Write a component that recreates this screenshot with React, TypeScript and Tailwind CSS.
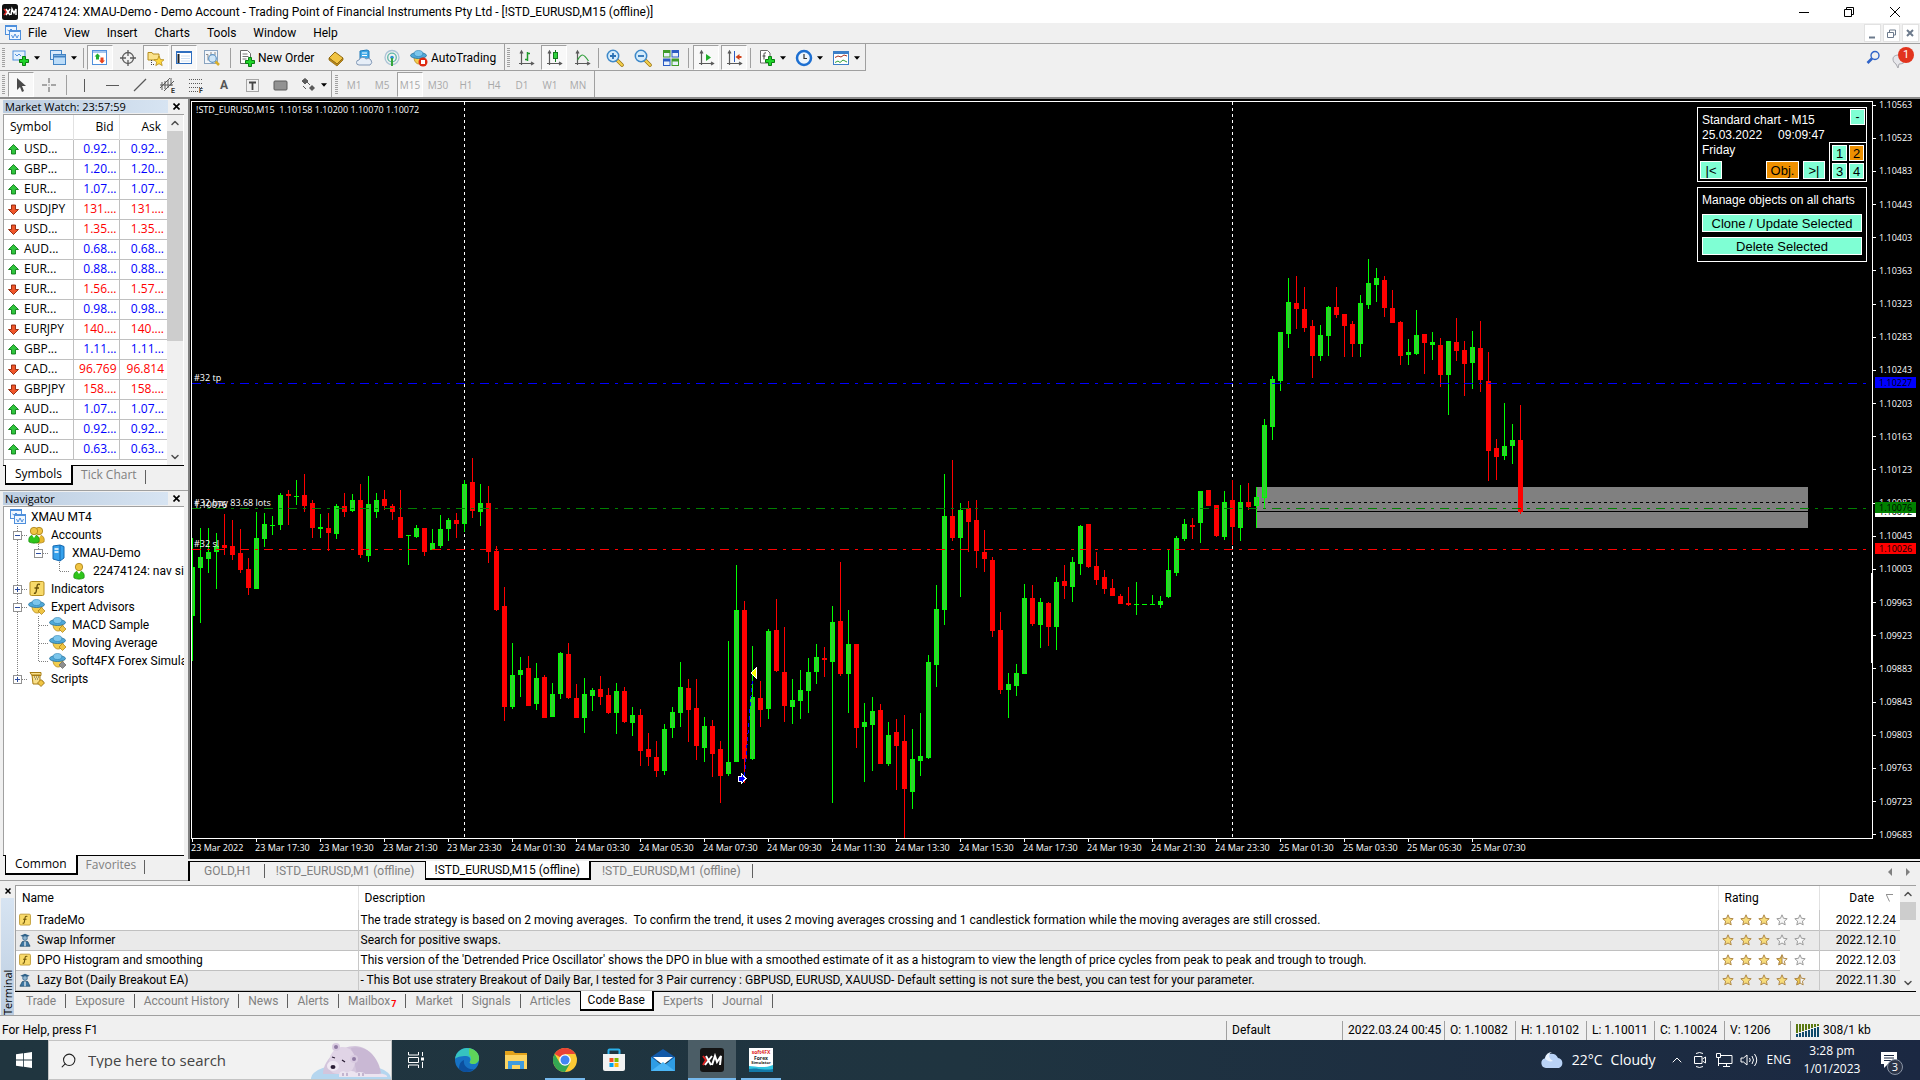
import type { ReactNode } from "react"
import { ChevronDown, ChevronUp, Search } from "lucide-react"

type Candle = [number, number, number, number, number]

// up flag, high, body top, body bottom, low - one row per 15 minute bar
const candles: Candle[] = [
  [1, 538, 567, 616, 661], [1, 528, 557, 568, 623], [1, 528, 552, 559, 573], [1, 533, 546, 552, 589],
  [0, 514, 545, 548, 555], [0, 520, 546, 555, 560], [0, 529, 553, 570, 573], [0, 558, 569, 588, 595],
  [1, 512, 538, 589, 589], [1, 513, 524, 539, 547], [1, 516, 525, 526, 535], [1, 493, 495, 525, 530],
  [0, 490, 494, 496, 525], [1, 480, 496, 497, 505], [0, 474, 495, 506, 512], [0, 500, 503, 528, 538],
  [1, 514, 527, 529, 538], [0, 513, 528, 533, 551], [1, 504, 506, 534, 539], [0, 493, 506, 512, 517],
  [1, 494, 500, 511, 512], [0, 484, 500, 555, 558], [1, 476, 504, 556, 562], [1, 493, 500, 512, 518],
  [0, 490, 499, 506, 510], [0, 504, 506, 512, 520], [0, 490, 517, 538, 538], [1, 535, 535, 536, 565],
  [1, 525, 528, 537, 538], [0, 528, 528, 552, 556], [1, 529, 543, 550, 550], [1, 515, 529, 546, 548],
  [1, 518, 520, 529, 541], [0, 513, 520, 524, 538], [1, 480, 484, 524, 532], [0, 458, 482, 511, 518],
  [1, 484, 503, 512, 526], [0, 486, 503, 552, 563], [0, 546, 551, 610, 611], [0, 587, 606, 707, 721],
  [1, 643, 675, 707, 709], [1, 657, 670, 675, 697], [0, 656, 668, 706, 706], [1, 663, 678, 704, 710],
  [0, 675, 677, 718, 718], [1, 683, 694, 717, 717], [1, 652, 653, 694, 699], [0, 643, 654, 698, 699],
  [0, 684, 698, 718, 718], [1, 678, 694, 718, 733], [1, 688, 690, 696, 711], [0, 676, 689, 697, 705],
  [0, 688, 695, 713, 714], [1, 683, 691, 713, 734], [0, 687, 691, 722, 723], [1, 707, 715, 723, 736],
  [0, 709, 715, 751, 766], [0, 733, 749, 757, 766], [0, 741, 757, 771, 777], [1, 724, 729, 771, 775],
  [1, 707, 712, 728, 738], [1, 662, 687, 713, 727], [0, 679, 688, 710, 742], [0, 679, 708, 746, 760],
  [1, 717, 726, 748, 762], [0, 720, 726, 754, 777], [0, 741, 749, 776, 803], [1, 641, 762, 774, 776],
  [1, 565, 610, 762, 762], [0, 601, 610, 759, 783], [1, 646, 697, 759, 760], [0, 681, 698, 710, 727],
  [1, 629, 631, 709, 719], [0, 599, 630, 671, 672], [0, 627, 672, 706, 722], [1, 679, 700, 707, 724],
  [1, 670, 690, 701, 719], [1, 658, 672, 691, 713], [1, 644, 657, 672, 684], [0, 647, 658, 660, 677],
  [1, 606, 622, 662, 803], [0, 562, 621, 674, 676], [1, 610, 644, 674, 713], [0, 644, 644, 728, 748],
  [1, 703, 722, 727, 782], [1, 697, 711, 725, 771], [0, 704, 710, 764, 764], [1, 722, 735, 764, 766],
  [0, 719, 732, 746, 790], [0, 715, 741, 789, 838], [1, 729, 759, 792, 809], [1, 713, 756, 761, 776],
  [1, 655, 662, 758, 759], [1, 585, 609, 665, 687], [1, 474, 516, 610, 625], [0, 460, 516, 538, 541],
  [1, 503, 510, 538, 597], [0, 501, 508, 522, 552], [0, 500, 520, 551, 568], [0, 530, 552, 559, 572],
  [0, 557, 560, 631, 637], [0, 612, 630, 690, 694], [1, 673, 684, 690, 718], [1, 664, 673, 686, 696],
  [1, 584, 598, 674, 674], [0, 585, 598, 624, 626], [1, 598, 602, 625, 648], [0, 602, 603, 627, 646],
  [1, 577, 582, 627, 650], [0, 565, 581, 586, 599], [1, 557, 562, 587, 602], [1, 525, 526, 564, 575],
  [0, 524, 524, 567, 568], [0, 552, 566, 580, 585], [0, 570, 577, 589, 594], [0, 579, 588, 596, 596],
  [0, 594, 596, 604, 604], [0, 587, 603, 605, 606], [1, 582, 604, 605, 615], [1, 604, 604, 605, 605],
  [1, 595, 604, 605, 605], [1, 596, 601, 605, 608], [1, 550, 570, 597, 598], [1, 536, 538, 573, 576],
  [1, 519, 524, 539, 541], [0, 518, 525, 527, 539], [1, 491, 491, 523, 543], [0, 490, 490, 506, 506],
  [0, 505, 505, 536, 537], [1, 491, 502, 537, 540], [0, 480, 500, 527, 545], [1, 485, 502, 528, 541],
  [0, 483, 502, 507, 510], [1, 487, 497, 506, 528], [1, 419, 425, 498, 508], [1, 376, 379, 427, 440],
  [1, 332, 332, 381, 391], [1, 278, 302, 334, 348], [0, 276, 303, 309, 329], [0, 287, 309, 328, 332],
  [0, 320, 326, 356, 378], [1, 325, 335, 356, 361], [1, 306, 307, 336, 356], [0, 287, 307, 315, 318],
  [0, 314, 314, 326, 357], [0, 321, 324, 344, 357], [1, 295, 303, 344, 357], [1, 259, 283, 305, 309],
  [1, 268, 278, 285, 302], [0, 276, 280, 308, 317], [0, 290, 308, 323, 323], [0, 321, 322, 356, 365],
  [1, 339, 352, 355, 365], [1, 310, 335, 354, 355], [0, 334, 334, 343, 374], [1, 332, 342, 345, 360],
  [0, 338, 345, 375, 387], [1, 341, 341, 375, 415], [0, 318, 342, 351, 361], [0, 341, 350, 364, 396],
  [1, 331, 347, 363, 389], [0, 321, 348, 380, 392], [0, 352, 381, 451, 481], [0, 439, 448, 457, 480],
  [1, 403, 446, 456, 460], [1, 424, 440, 446, 464], [0, 405, 440, 512, 514],
]

const prices = [
  "1.10563", "1.10523", "1.10483", "1.10443", "1.10403", "1.10363", "1.10323", "1.10283",
  "1.10243", "1.10203", "1.10163", "1.10123", "1.10083", "1.10043", "1.10003", "1.09963",
  "1.09923", "1.09883", "1.09843", "1.09803", "1.09763", "1.09723", "1.09683",
]

const times = [
  "23 Mar 2022", "23 Mar 17:30", "23 Mar 19:30", "23 Mar 21:30", "23 Mar 23:30", "24 Mar 01:30",
  "24 Mar 03:30", "24 Mar 05:30", "24 Mar 07:30", "24 Mar 09:30", "24 Mar 11:30", "24 Mar 13:30",
  "24 Mar 15:30", "24 Mar 17:30", "24 Mar 19:30", "24 Mar 21:30", "24 Mar 23:30", "25 Mar 01:30",
  "25 Mar 03:30", "25 Mar 05:30", "25 Mar 07:30",
]

const symbols: [string, string, string, boolean][] = [
  ["USD...", "0.92...", "0.92...", true],
  ["GBP...", "1.20...", "1.20...", true],
  ["EUR...", "1.07...", "1.07...", true],
  ["USDJPY", "131....", "131....", false],
  ["USD...", "1.35...", "1.35...", false],
  ["AUD...", "0.68...", "0.68...", true],
  ["EUR...", "0.88...", "0.88...", true],
  ["EUR...", "1.56...", "1.57...", false],
  ["EUR...", "0.98...", "0.98...", true],
  ["EURJPY", "140....", "140....", false],
  ["GBP...", "1.11...", "1.11...", true],
  ["CAD...", "96.769", "96.814", false],
  ["GBPJPY", "158....", "158....", false],
  ["AUD...", "1.07...", "1.07...", true],
  ["AUD...", "0.92...", "0.92...", true],
  ["AUD...", "0.63...", "0.63...", true],
]

const codeBase = [
  { icon: "f", name: "TradeMo", rating: 3, date: "2022.12.24", text: "The trade strategy is based on 2 moving averages.  To confirm the trend, it uses 2 moving averages crossing and 1 candlestick formation while the moving averages are still crossed." },
  { icon: "e", name: "Swap Informer", rating: 3, date: "2022.12.10", text: "Search for positive swaps." },
  { icon: "f", name: "DPO Histogram and smoothing", rating: 3.5, date: "2022.12.03", text: "This version of the 'Detrended Price Oscillator' shows the DPO in blue with a smoothed estimate of it as a histogram to view the length of price cycles from peak to peak and trough to trough." },
  { icon: "e", name: "Lazy Bot (Daily Breakout EA)", rating: 4.5, date: "2022.11.30", text: "- This Bot use stratery Breakout of Daily Bar, I tested for 3 Pair currency : GBPUSD, EURUSD, XAUUSD- Default setting is not sure the best, you can test for your parameter." },
]

const Ico = ({ children, size = 18 }: { children: ReactNode; size?: number }) => (
  <svg width={size} height={size} viewBox="0 0 18 18" fill="none" className="shrink-0" aria-hidden="true">
    {children}
  </svg>
)

const Plus = ({ x, y }: { x: number; y: number }) => (
  <path transform={`translate(${x} ${y})`} d="M3.5 .5h3v3h3v3h-3v3h-3v-3h-3v-3h3z" fill="#1fd428" stroke="#0b7d12" />
)

const ChartsIcon = () => (
  <Ico>
    <rect x="1.5" y="1.5" width="11" height="9" fill="#eef6ff" stroke="#4e8fdc" />
    <path d="M2 2.5h10M3.5 6l1.500 1 2-2 2 2" stroke="#4e8fdc" />
    <rect x="5.500" y="6.500" width="11" height="9" fill="#eef6ff" stroke="#4e8fdc" />
    <path d="M6 7.500h10M7.500 11l1.500 3 2-4 2 4 1.500-3" stroke="#4e8fdc" />
  </Ico>
)

const Hat = ({ gray = false, stop = false }: { gray?: boolean; stop?: boolean }) => (
  <Ico>
    <path d="M4 8c0 4 2 7 5 7s5-2 5-6z" fill="#f2cd4e" stroke="#b98c1c" strokeWidth=".8" />
    <ellipse cx="8.500" cy="6.500" rx="8" ry="3" fill="#4fa8d8" stroke="#23709c" strokeWidth=".8" />
    <ellipse cx="8.500" cy="4.500" rx="4.300" ry="3" fill="#7cc6ec" stroke="#2b80b0" strokeWidth=".6" />
    {stop ? (
      <>
        <circle cx="13" cy="13" r="4.500" fill="#df2a12" />
        <rect x="11" y="11" width="4" height="4" fill="#fff" />
      </>
    ) : (
      <path d="M13.500 9.500l3.500 3.500-3.500 3.500-3.500-3.500z" fill={gray ? "#8f8f8f" : "#f0c443"} stroke={gray ? "#666" : "#a67c12"} strokeWidth=".7" />
    )}
  </Ico>
)

const Person = ({ x, green = true }: { x: number; green?: boolean }) => (
  <g transform={`translate(${x} 0)`}>
    <path d="M1 16c-1-4 1-7 5-7s6 3 5 7c-3 1.500-7 1.500-10 0z" fill={green ? "#2fc51b" : "#e8b92c"} stroke={green ? "#178a0b" : "#a67c12"} strokeWidth=".7" />
    <path d="M4 9l2 3 2-3z" fill="#fff" />
    <circle cx="6" cy="5" r="3.700" fill="#f0c443" stroke="#a67c12" strokeWidth=".8" />
  </g>
)

const FIcon = ({ size = 18 }: { size?: number }) => (
  <Ico size={size}>
    <rect x="2" y="1.500" width="14" height="14" rx="1.500" fill="#f8da6a" stroke="#b58d1e" />
    <path d="M12 4.500c-2-1-2.700 0-3 2l-.8 5c-.3 1.700-1.200 2-2.200 1.500M6.500 8h4.500" stroke="#6b5208" strokeWidth="1.400" />
  </Ico>
)

const EaIcon = () => (
  <Ico size={14}>
    <path d="M3 3.500L9 1l6 2.500L9 6z" fill="#2d5f86" />
    <circle cx="9" cy="6.500" r="3" fill="#8fb4cf" stroke="#2d5f86" />
    <path d="M2.500 17l3-6h7l3 6z" fill="#3c77a3" stroke="#234d6d" />
    <path d="M9 11v6" stroke="#fff" strokeWidth="1.500" />
  </Ico>
)

const Axes = ({ children }: { children?: ReactNode }) => (
  <Ico>
    <path d="M4.500 2v14M2 14.500h14M3 4.500l1.500-2.500 1.500 2.500M14 13l2.500 1.500-2.500 1.500" stroke="#5a5a5a" strokeWidth="1.200" />
    {children}
  </Ico>
)

const Lens = ({ sign }: { sign: string }) => (
  <Ico>
    <path d="M11 11l5 5" stroke="#9a7411" strokeWidth="3.600" strokeLinecap="round" />
    <path d="M11 11l5 5" stroke="#f3cf4c" strokeWidth="2.200" strokeLinecap="round" />
    <circle cx="7" cy="7" r="5.700" fill="#d5ecfb" stroke="#3d88c9" strokeWidth="1.500" />
    <path d={sign} stroke="#2c72b5" strokeWidth="1.800" />
  </Ico>
)

const Caret = () => (
  <svg width="6" height="4" viewBox="0 0 7 4" aria-hidden="true">
    <path d="M0 0h7L3.500 4z" fill="#000" />
  </svg>
)

const Grip = () => (
  <span className="ml-[2px] mr-[2px] w-[3px] h-5 bg-[repeating-linear-gradient(#a0a0a0_0_1px,#f0f0f0_1px_2px)]" />
)

const Sep = ({ className = "" }: { className?: string }) => <span className={`w-px h-5 bg-[#a0a0a0] ${className}`} />

interface ToolProps {
  label: string
  pressed?: boolean
  menu?: boolean
  children: ReactNode
}

function Tool({ label, pressed, menu, children }: ToolProps) {
  return (
    <button
      title={label}
      aria-label={label}
      className={`h-[25px] flex items-center justify-center gap-1 shrink-0 border ${menu ? "w-[37px]" : "w-[26px] mx-px"} ${
        pressed ? "bg-[#f8f8f8] border-[#a0a0a0] border-r-white border-b-white" : "border-transparent"
      }`}
    >
      {children}
      {menu && <Caret />}
    </button>
  )
}

function TitleBar() {
  return (
    <header className="h-[23px] bg-white flex items-center shrink-0 pl-[2px] pr-[2px]">
      <svg width="16" height="16" viewBox="0 0 32 32" aria-hidden="true">
        <rect width="32" height="32" rx="5" fill="#111" />
        <path d="M4 10l5 6-5 6" stroke="#e02020" strokeWidth="3" fill="none" />
        <path d="M8 10l8 12M16 10L8 22M18 22l2-12 4 8 4-8v12" stroke="#fff" strokeWidth="3" fill="none" />
      </svg>
      <h1 className="ml-[5px] text-[12px] grow">
        22474124: XMAU-Demo - Demo Account - Trading Point of Financial Instruments Pty Ltd - [!STD_EURUSD,M15 (offline)]
      </h1>
      <div className="flex h-full text-black">
        <button aria-label="Minimize" className="w-[45px] flex items-center justify-center">
          <svg width="10" height="10"><path d="M0 5.500h10" stroke="#000" /></svg>
        </button>
        <button aria-label="Restore" className="w-[45px] flex items-center justify-center">
          <svg width="10" height="10" fill="none" stroke="#000"><path d="M.5 2.500h7v7h-7zM2.500 2.500v-2h7v7h-2" /></svg>
        </button>
        <button aria-label="Close" className="w-[47px] flex items-center justify-center">
          <svg width="10" height="10" stroke="#000"><path d="M0 0l10 10M10 0L0 10" /></svg>
        </button>
      </div>
    </header>
  )
}

function MenuBar() {
  return (
    <nav className="h-5 flex items-center shrink-0 pl-1 pr-px">
      <ChartsIcon />
      <div className="flex grow pl-[6px] gap-[17px]">
        {["File", "View", "Insert", "Charts", "Tools", "Window", "Help"].map((m) => (
          <button key={m}>{m}</button>
        ))}
      </div>
      <div className="flex gap-[2px] text-[#6c7a8c]">
        {["M3 10.500h6", "M2.500 5.500h6v5h-6zM4.500 5v-2h6v5h-2", "M3 3l6 6M9 3l-6 6"].map((d, i) => (
          <button key={d} aria-label={["Minimize chart", "Restore chart", "Close chart"][i]} className="w-[17px] h-[18px] bg-white border border-[#e2e2e2] flex items-center justify-center">
            <svg width="13" height="13" fill="none" stroke="currentColor" strokeWidth={i === 1 ? 1 : 2}><path d={d} /></svg>
          </button>
        ))}
      </div>
    </nav>
  )
}

function StandardToolbar() {
  return (
    <div className="h-[28px] flex items-center shrink-0 border-t border-[#a0a0a0]">
      <div className="h-full flex items-center border-r border-b border-[#a0a0a0] pt-px">
        <Grip />
        <Tool label="New chart" menu>
          <Ico>
            <rect x="1" y="2" width="12" height="9" fill="#e4f1fd" stroke="#4e8fdc" />
            <path d="M3 5l2 2 2-2 2 2" stroke="#4e8fdc" />
            <Plus x={7} y={7} />
          </Ico>
        </Tool>
        <Tool label="Profiles" menu>
          <Ico>
            <rect x="1.500" y="1.500" width="11" height="9" fill="#d8eafc" stroke="#4183c4" />
            <rect x="4.500" y="5.500" width="12" height="10" fill="#bcdcf8" stroke="#4183c4" />
            <path d="M5 7.500h11" stroke="#4183c4" strokeWidth="2" />
          </Ico>
        </Tool>
        <Sep className="ml-[2px] mr-[2px]" />
        <Tool label="Market Watch" pressed>
          <Ico>
            <rect x="1.500" y="1.500" width="14" height="14" fill="#fff" stroke="#4e8fdc" />
            <path d="M2 3h13" stroke="#4e8fdc" />
            <path d="M6.500 4.500l3 3H8v3H5v-3H3.500z" fill="#1fae2a" />
            <path d="M11 14.500l-3-3h1.500v-3h3v3H14z" fill="#e8431c" />
          </Ico>
        </Tool>
        <Tool label="Data Window">
          <Ico>
            <circle cx="9" cy="9" r="5.500" stroke="#5c5c5c" strokeWidth="1.300" />
            <path d="M9 1v6M9 11v6M1 9h6M11 9h6" stroke="#5c5c5c" strokeWidth="1.300" />
          </Ico>
        </Tool>
        <Tool label="Navigator" pressed>
          <Ico>
            <path d="M1 3.500h4l1 1.500h6v6H1z" fill="#fbe38c" stroke="#b58d1e" />
            <path d="M4.500 11v5M4 15.500h4" stroke="#444" strokeDasharray="1 1" />
            <path d="M12 7l1.500 3.500 3.500.3-2.700 2.300.9 3.500-3.200-1.900-3.200 1.900.9-3.500L7 10.800l3.500-.3z" fill="#ffd83b" stroke="#b58d1e" strokeWidth=".8" />
          </Ico>
        </Tool>
        <Tool label="Terminal" pressed>
          <Ico>
            <rect x="1.500" y="2.500" width="15" height="12" fill="#fff" stroke="#2f6fc0" />
            <path d="M2 3.500h14" stroke="#2f6fc0" />
            <path d="M3.500 5v9" stroke="#222" strokeWidth="2" />
            <path d="M6 7h9M6 9.500h9M6 12h9" stroke="#cfe0f2" />
          </Ico>
        </Tool>
        <Tool label="Strategy Tester">
          <Ico>
            <rect x="1.500" y="1.500" width="13" height="13" fill="#f3f6fa" stroke="#8aa4c0" />
            <path d="M3 5.500h2v6M8 3v4M12 3v3" stroke="#888" />
            <path d="M12 12l4 4" stroke="#d9ae2a" strokeWidth="2.500" />
            <circle cx="9.500" cy="9.500" r="3.800" fill="#cfe6f8" stroke="#5d93c4" strokeWidth="1.200" />
          </Ico>
        </Tool>
        <Sep className="ml-1 mr-[7px]" />
        <button className="flex items-center gap-[2px] w-[84px] whitespace-nowrap">
          <Ico>
            <path d="M2.500 1.500h7l3 3v10h-10z" fill="#fff" stroke="#6b6b6b" />
            <path d="M4.500 5h5M4.500 7.500h6M4.500 10h4" stroke="#777" />
            <Plus x={7} y={8} />
          </Ico>
          New Order
        </button>
        <Tool label="MetaEditor">
          <Ico>
            <path d="M2 9l6-6 8 6-6 6z" fill="#f1c443" stroke="#8f6910" />
            <path d="M2 9v2l8 6 6-6V9l-6 6z" fill="#c08a19" stroke="#8f6910" strokeWidth=".8" />
          </Ico>
        </Tool>
        <Tool label="MQL5 Community">
          <Ico>
            <path d="M5 2l7-1 2 1v9H5z" fill="#40a9e8" stroke="#1c78b8" />
            <path d="M7 4h5M7 6.500h5" stroke="#fff" />
            <path d="M4 16a2.500 2.500 0 010-5 4 4 0 017-1 3 3 0 014 6z" fill="#e6eef8" stroke="#8197b5" />
          </Ico>
        </Tool>
        <Tool label="Signals">
          <Ico>
            <circle cx="9" cy="8.500" r="7" stroke="#a9c3d6" strokeWidth="1.300" />
            <circle cx="9" cy="8.500" r="4.300" stroke="#5fb7a6" strokeWidth="1.300" />
            <circle cx="9" cy="8.500" r="1.800" fill="#2a8fd0" />
            <path d="M9 9v8" stroke="#35a63c" strokeWidth="2" />
          </Ico>
        </Tool>
        <button className="flex items-center gap-[3px] pl-1 w-[98px] whitespace-nowrap">
          <Hat stop />
          AutoTrading
        </button>
      </div>
      <div className="h-full flex items-center border-r border-b border-[#a0a0a0] pr-px pt-px">
        <Grip />
        <Tool label="Bar Chart"><Axes><path d="M10.500 3v9M8 10.500h2.500M10.500 4.500H13" stroke="#1f9a2b" strokeWidth="1.500" /></Axes></Tool>
        <Tool label="Candlesticks" pressed>
          <Axes>
            <path d="M10.500 1v12" stroke="#117a1c" />
            <rect x="8.500" y="3.500" width="4" height="6" fill="#2fd33c" stroke="#117a1c" />
          </Axes>
        </Tool>
        <Tool label="Line Chart"><Axes><path d="M4.500 11c2-3 3-5 5-5s4 3 6 6" stroke="#2f9e3a" strokeWidth="1.200" /></Axes></Tool>
        <Sep className="mx-[2px]" />
        <Tool label="Zoom In"><Lens sign="M4 7h6M7 4v6" /></Tool>
        <Tool label="Zoom Out"><Lens sign="M4 7h6" /></Tool>
        <Tool label="Tile Windows">
          <Ico>
            <path d="M1 1h7.500v7.500H1zM9.500 9.500H17V17H9.500z" fill="#3f9c2a" />
            <path d="M9.500 1H17v7.500H9.500zM1 9.500h7.500V17H1z" fill="#2b5cc4" />
            <path d="M2 4h5.500v3.500H2zM10.500 4H16v3.500h-5.500zM2 12.500h5.500V16H2zM10.500 12.500H16V16h-5.500z" fill="#e9f1fb" />
          </Ico>
        </Tool>
        <Sep className="mx-[3px]" />
        <Tool label="Auto Scroll" pressed><Axes><path d="M9 5l5 3.500L9 12z" fill="#1fae2a" /></Axes></Tool>
        <Tool label="Chart Shift" pressed><Axes><path d="M9.500 2v11" stroke="#2b5cc4" /><path d="M10.500 8l4-3v2h2v2h-2v2z" fill="#d0431c" /></Axes></Tool>
        <Sep className="mx-[2px]" />
        <Tool label="Indicators" menu>
          <Ico>
            <path d="M2.500 1.500h7l2.500 2.500v10H2.500z" fill="#fff" stroke="#6b6b6b" />
            <path d="M8 4c-1.500-.5-2 0-2 1.500v5M4.500 7h3" stroke="#444" />
            <Plus x={7} y={7} />
          </Ico>
        </Tool>
        <Tool label="Periods" menu>
          <Ico>
            <circle cx="9" cy="9" r="7" fill="#eef6fd" stroke="#1d6fd1" strokeWidth="2.500" />
            <path d="M9 5v4.500h3" stroke="#333" strokeWidth="1.200" />
          </Ico>
        </Tool>
        <Tool label="Templates" menu>
          <Ico>
            <rect x="1.500" y="2.500" width="15" height="13" fill="#fff" stroke="#3c7fc8" />
            <path d="M2 4h14" stroke="#3c7fc8" strokeWidth="2" />
            <path d="M3 8.500l3-1.500 3 1 3-2 3 1" stroke="#a83220" />
            <path d="M3 13.500l3-1.500 2 1.500 3-2.500 4 2" stroke="#2f9e3a" />
          </Ico>
        </Tool>
      </div>
      <div className="grow" />
      <button aria-label="Search" className="mr-[11px] text-[#2f63c8]">
        <svg width="15" height="15" viewBox="0 0 15 15" fill="none" stroke="currentColor" aria-hidden="true">
          <circle cx="9" cy="5.500" r="4" strokeWidth="1.400" />
          <path d="M6 8.500L1.500 13" strokeWidth="2.600" />
        </svg>
      </button>
      <button aria-label="Notifications" className="relative w-[22px] h-[22px] mr-[6px]">
        <svg width="16" height="16" viewBox="0 0 16 16" className="mt-[6px]" aria-hidden="true">
          <path d="M1 6c0-3 3-4 6-4s6 2 6 5-3 4-6 4l-1 4-2-4C2 10 1 8 1 6z" fill="#e6e6ea" stroke="#a6a6ac" />
        </svg>
        <span className="absolute top-0 right-0 size-4 rounded-full bg-[#e2341d] text-white text-[11px] leading-4">1</span>
      </button>
    </div>
  )
}

function DrawToolbar() {
  const gray = "#5a5a5a"
  return (
    <div className="h-[28px] flex items-center shrink-0 border-b-2 border-[#8a8a8a]">
      <div className="h-full flex items-center border-r border-[#a0a0a0] pt-px">
        <Grip />
        <Tool label="Cursor" pressed><Ico><path d="M5 2v12l3-3 2 5 2-1-2-5h4z" fill="#4a4a4a" /></Ico></Tool>
        <Tool label="Crosshair"><Ico><path d="M9 2v5M9 11v5M2 9h5M11 9h5M8.500 9h1" stroke={gray} /></Ico></Tool>
        <Sep className="mx-[3px]" />
        <Tool label="Vertical Line"><Ico><path d="M9.500 3v13" stroke={gray} /></Ico></Tool>
        <Tool label="Horizontal Line"><Ico><path d="M3 9.500h13" stroke={gray} /></Ico></Tool>
        <Tool label="Trendline"><Ico><path d="M3 15L15 3" stroke={gray} strokeWidth="1.200" /></Ico></Tool>
        <Tool label="Equidistant Channel">
          <Ico>
            <path d="M1 12L11 2M5 15L15 5M3 6v8M6 5v8M9 4v8M12 2v8M1 9h13" stroke={gray} />
            <text x="12" y="17" fontSize="7" fontWeight="700" fill="#333">E</text>
          </Ico>
        </Tool>
        <Tool label="Fibonacci Retracement">
          <Ico>
            <path d="M2 3.500h14M2 7.500h14M2 11.500h14M2 15.500h9" stroke={gray} strokeDasharray="1 1" />
            <text x="12" y="17" fontSize="7" fontWeight="700" fill="#333">F</text>
          </Ico>
        </Tool>
        <Tool label="Text"><span className="text-[12px] font-bold text-[#555]">A</span></Tool>
        <Tool label="Text Label">
          <Ico>
            <rect x="3.500" y="3.500" width="12" height="12" stroke={gray} strokeDasharray="1 1" />
            <path d="M6 6.500h7M9.500 6v8" stroke="#444" strokeWidth="1.800" />
          </Ico>
        </Tool>
        <Tool label="Rectangle"><Ico><rect x="3" y="5" width="13" height="9" rx="1" fill="#929292" stroke={gray} /></Ico></Tool>
        <Tool label="Arrows" menu>
          <Ico>
            <path d="M3 5l3-2.500L9 5 6 8zM8 6l3 3M4 10l3 3" fill={gray} stroke={gray} />
            <path d="M10 12l3-3 3 3-3 3z" fill={gray} />
          </Ico>
        </Tool>
      </div>
      <div className="h-full flex items-center border-r border-[#a0a0a0] pl-px pr-[2px] pt-px">
        <Grip />
        {["M1", "M5", "M15", "M30", "H1", "H4", "D1", "W1", "MN"].map((p) => (
          <Tool key={p} label={p} pressed={p === "M15"}>
            <span className="text-[10px] font-['Open_Sans',sans-serif] text-[#a8a8a8]">{p}</span>
          </Tool>
        ))}
      </div>
    </div>
  )
}

function PanelTitle({ text }: { text: string }) {
  return (
    <div className="h-[15px] flex items-center shrink-0">
      <h2 className="grow h-[13px] leading-[13px] pl-[2px] text-[11px] bg-linear-to-r from-[#bccde0] to-[#d7e4f2]">{text}</h2>
      <button aria-label={`Close ${text}`} className="w-4 flex justify-center">
        <svg width="7" height="7" stroke="#000" strokeWidth="1.600"><path d="M.5 .5l6 6M6.500 .5l-6 6" /></svg>
      </button>
    </div>
  )
}

function PanelTabs({ active, other }: { active: string; other: string }) {
  return (
    <div className="h-[21px] flex shrink-0 border-t border-black">
      <button className="-mt-px ml-[2px] h-5 px-[9px] bg-white border border-t-0 border-b-2 border-r-2 border-black">{active}</button>
      <button className="h-[18px] px-2 text-[#808080]">{other}</button>
      <span className="mt-1 h-[14px] w-px bg-[#606060]" />
    </div>
  )
}

function ScrollBar({ thumb }: { thumb: string }) {
  return (
    <div className="w-4 shrink-0 bg-[#f0f0f0] flex flex-col items-center text-[#505050]">
      <ChevronUp size={12} strokeWidth={3} className="my-[2px]" />
      <div className={`w-full bg-[#cdcdcd] ${thumb}`} />
      <div className="grow" />
      <ChevronDown size={12} strokeWidth={3} className="my-[2px]" />
    </div>
  )
}

function MarketWatch() {
  return (
    <section className="flex flex-col shrink-0 pl-[3px] pr-1">
      <PanelTitle text="Market Watch: 23:57:59" />
      <div className="border-l border-t border-[#a0a0a0] flex h-[351px] bg-white overflow-hidden">
        <table className="w-[163px] table-fixed border-collapse self-start">
          <thead>
            <tr className="h-6 border-b border-[#d0d0d0]">
              <th className="w-[69px] text-left font-normal pl-[6px] border-r border-[#e2e2e2]">Symbol</th>
              <th className="w-[46px] text-right font-normal pr-[5px] border-r border-[#e2e2e2]">Bid</th>
              <th className="text-right font-normal pr-[6px]">Ask</th>
            </tr>
          </thead>
          <tbody>
            {symbols.map(([name, bid, ask, up], i) => (
              <tr key={i} className="h-5 border-b border-[#c0c0c0]">
                <td className="border-r border-[#c0c0c0] pl-1">
                  <span className="flex items-center gap-[5px]">
                    <svg width="11" height="11" viewBox="0 0 11 11" aria-hidden="true">
                      {up ? (
                        <path d="M5.500 .5l5 5h-3v4.500h-4V5.500h-3z" fill="#2fc53c" stroke="#0f7a1a" strokeWidth=".9" />
                      ) : (
                        <path d="M5.500 10.500l5-5h-3V1h-4v4.500h-3z" fill="#f0562a" stroke="#8f2208" strokeWidth=".9" />
                      )}
                    </svg>
                    {name}
                  </span>
                </td>
                <td className={`text-right pr-[2px] border-r border-[#c0c0c0] ${up ? "text-[#0000ff]" : "text-[#ff0000]"}`}>{bid}</td>
                <td className={`text-right pr-[3px] ${up ? "text-[#0000ff]" : "text-[#ff0000]"}`}>{ask}</td>
              </tr>
            ))}
          </tbody>
        </table>
        <ScrollBar thumb="h-[210px]" />
      </div>
      <PanelTabs active="Symbols" other="Tick Chart" />
    </section>
  )
}

// One 21px guide column of the tree. v line, t branch, l last branch,
// - open box, m open box on a last branch, + closed box, e closed box on a last branch
function Guide({ kind }: { kind: string }) {
  const dots = { stroke: "#808080", strokeDasharray: "1 1" }
  const box = "+-me".includes(kind)
  return (
    <svg width="21" height="18" className="shrink-0" shapeRendering="crispEdges" aria-hidden="true">
      {kind !== " " && <path d={"vt+-".includes(kind) ? "M10.500 0v18" : "M10.500 0v9"} {...dots} />}
      {kind !== " " && kind !== "v" && <path d="M11 9.500h10" {...dots} />}
      {box && <rect x="6.500" y="5.500" width="8" height="8" fill="#fff" stroke="#919191" />}
      {box && <path d={kind === "-" || kind === "m" ? "M8 9.500h5" : "M8 9.500h5M10.500 7v5"} stroke="#2b4ca0" />}
    </svg>
  )
}

const tree: { guides: string; icon: ReactNode; text: string }[] = [
  { guides: "-", icon: <Ico><Person x={5} green={false} /><Person x={0} /></Ico>, text: "Accounts" },
  {
    guides: "vm",
    icon: (
      <Ico>
        <path d="M4 2l7-1 4 1.500V14l-4 3-7-2z" fill="#36a1ec" stroke="#1468b0" />
        <path d="M11 1v16" stroke="#1468b0" />
        <path d="M5.500 5h4M5.500 8h4" stroke="#fff" strokeWidth="1.300" />
      </Ico>
    ),
    text: "XMAU-Demo",
  },
  { guides: "v l", icon: <Ico><Person x={3} /></Ico>, text: "22474124: nav sir" },
  { guides: "+", icon: <FIcon />, text: "Indicators" },
  { guides: "-", icon: <Hat />, text: "Expert Advisors" },
  { guides: "vt", icon: <Hat />, text: "MACD Sample" },
  { guides: "vt", icon: <Hat />, text: "Moving Average" },
  { guides: "vl", icon: <Hat gray />, text: "Soft4FX Forex Simula" },
  {
    guides: "e",
    icon: (
      <Ico>
        <path d="M2 2.500h11v3H4zM4 5h8v6h3v3H5z" fill="#f9e08a" stroke="#a67c12" />
        <path d="M6 7h1M8 7h1M10 7h1M7 9h1M9 9h1" stroke="#555" />
        <path d="M13 9.500l3.500 3.500-3.500 3.500L9.500 13z" fill="#f0c443" stroke="#8f6910" strokeWidth=".8" />
      </Ico>
    ),
    text: "Scripts",
  },
]

function Navigator() {
  return (
    <section className="flex flex-col grow min-h-0 pl-[3px] pr-1 mt-1 border-t border-[#a0a0a0]">
      <PanelTitle text="Navigator" />
      <ul className="grow border-l border-t border-[#a0a0a0] bg-white overflow-hidden whitespace-nowrap font-['Roboto',sans-serif]">
        <li className="h-[18px] mt-px flex items-center gap-1 pl-[5px]">
          <ChartsIcon />
          XMAU MT4
        </li>
        {tree.map((n) => (
          <li key={n.text} className="h-[18px] flex items-center pl-[3px]">
            {n.guides.split("").map((k, i) => (
              <Guide key={i} kind={k} />
            ))}
            {n.icon}
            <span className="ml-[5px]">{n.text}</span>
          </li>
        ))}
      </ul>
      <PanelTabs active="Common" other="Favorites" />
    </section>
  )
}

function Plot() {
  return (
    <svg width="1680" height="736" viewBox="192 102 1680 736" shapeRendering="crispEdges" className="block" role="img" aria-label="EURUSD M15 candles">
      <path d="M464.500 102v736M1232.500 102v736" stroke="#fff" strokeDasharray="3 3" />
      <rect x="1256" y="487" width="552" height="41" fill="#808080" />
      <path d="M1256 502.500h552" stroke="#000" strokeDasharray="3 3" />
      <path d="M1256 511.500h552" stroke="#000" />
      {candles.map(([up, high, top, bottom, low], i) => {
        const x = 192 + i * 8
        const color = up ? "#00ff00" : "#ff0000"
        return (
          <g key={i}>
            <rect x={x} y={high} width="1" height={Math.max(low - high, 1)} fill={color} />
            <rect x={x - 2} y={top} width="5" height={Math.max(bottom - top, 1)} fill={color} />
            {up === 1 && bottom - top > 2 && <rect x={x - 1} y={top + 1} width="3" height={bottom - top - 2} fill="#32cd32" />}
          </g>
        )
      })}
      <path d="M192 383.500h1674" stroke="#0000ff" strokeDasharray="9 6 3 6" />
      <path d="M192 508.500h1674" stroke="#008000" strokeDasharray="9 6 3 6" />
      <path d="M192 549.500h1674" stroke="#ff0000" strokeDasharray="9 6 3 6" />
      <path d="M744.500 776L752.500 678" stroke="#0000ff" strokeDasharray="4 3" />
      <path d="M756 668v10l-5-5z" fill="#ffff00" stroke="#fff" />
      <path d="M738 776h3v-3l5 5.500-5 5.500v-3h-3z" fill="#0000ff" stroke="#fff" />
      <g fill="#fff" fontSize="9">
        <text x="194" y="381">#32 tp</text>
        <text x="194" y="506">#32 buy 83.68 lots</text>
        <text x="194" y="508">1.10076</text>
        <text x="194" y="547">#32 sl</text>
      </g>
    </svg>
  )
}

const simBtn = "bg-[#7fffd4] text-black border border-white flex items-center justify-center"

function Simulator() {
  return (
    <div className="absolute top-[5px] right-[5px] w-[170px] flex flex-col gap-[5px] font-['Liberation_Sans',sans-serif] text-[12px] leading-[15px] text-white">
      <div className="h-[75px] border border-white bg-black pl-1 flex">
        <div className="grow flex flex-col pt-[5px]">
          <span className="whitespace-nowrap">Standard chart - M15</span>
          <span className="flex gap-4"><span>25.03.2022</span><span>09:09:47</span></span>
          <span>Friday</span>
          <div className="flex mt-[3px] -ml-[2px] pr-1 text-[13px]">
            <button className={`${simBtn} w-[22px] h-[18px]`}>|&lt;</button>
            <span className="grow" />
            <button className={`${simBtn} w-[33px] h-[18px] mr-1 !bg-[#ee9000]`}>Obj.</button>
            <button className={`${simBtn} w-[22px] h-[18px]`}>&gt;|</button>
          </div>
        </div>
        <div className="w-[37px] shrink-0 flex flex-col">
          <button className={`${simBtn} w-[15px] h-4 self-end mt-px mr-px`}>-</button>
          <div className="mt-auto border-l border-t border-white grid grid-cols-2 gap-x-[2px] gap-y-[2px] p-[2px] text-[13px]">
            <button className={`${simBtn} h-4`}>1</button>
            <button className={`${simBtn} h-4 !bg-[#ee9000]`}>2</button>
            <button className={`${simBtn} h-4`}>3</button>
            <button className={`${simBtn} h-4`}>4</button>
          </div>
        </div>
      </div>
      <div className="h-[75px] border border-white bg-black px-1 pt-[5px] flex flex-col">
        <span className="whitespace-nowrap">Manage objects on all charts</span>
        <button className={`${simBtn} mt-[6px] h-[18px] text-[13px]`}>Clone / Update Selected</button>
        <button className={`${simBtn} mt-[5px] h-[18px] text-[13px]`}>Delete Selected</button>
      </div>
    </div>
  )
}

function ChartWindow() {
  return (
    <div className="grow min-h-0 flex flex-col bg-black text-white text-[9px] font-['Open_Sans',sans-serif] pl-px pt-[2px] border-l-2 border-[#808080]">
      <div className="h-[738px] flex">
        <div className="grow min-w-0 relative border border-white overflow-hidden">
          <Plot />
          <span className="absolute left-1 top-[1px] text-[9px] leading-[14px] whitespace-pre">!STD_EURUSD,M15  1.10158 1.10200 1.10070 1.10072</span>
          <Simulator />
          <span className="absolute right-0 top-[471px] w-px h-[90px] bg-white" />
        </div>
        <div className="w-[47px] shrink-0 relative">
          <ul className="h-[740px] flex flex-col justify-between -mt-px leading-[10px]">
            {prices.map((p) => (
              <li key={p} className="flex items-center h-[10px]">
                <span className="w-[3px] h-px bg-white mr-[3px]" />
                {p}
              </li>
            ))}
          </ul>
          <span className="absolute left-[2px] top-[405px] w-[41px] h-[11px] leading-[11px] pl-1 bg-white text-black">1.10072</span>
          <span className="absolute left-[2px] top-[276px] w-[41px] h-[11px] leading-[11px] pl-1 bg-[#0000ff] text-black">1.10227</span>
          <span className="absolute left-[2px] top-[401px] w-[41px] h-[11px] leading-[11px] pl-1 bg-[#008000] text-black">1.10076</span>
          <span className="absolute left-[2px] top-[442px] w-[41px] h-[11px] leading-[11px] pl-1 bg-[#ff0000] text-black">1.10026</span>
        </div>
      </div>
      <div className="flex">
        {times.map((t) => (
          <div key={t} className="w-16 shrink-0 whitespace-nowrap">
            <div className="ml-px w-px h-[3px] bg-white" />
            <div className="leading-[12px]">{t}</div>
          </div>
        ))}
      </div>
    </div>
  )
}

function ChartTabs() {
  return (
    <div className="h-5 mt-[2px] shrink-0 flex border-t border-l-2 border-black text-[#808080]">
      <button className="pl-[14px] pr-3 h-[18px]">GOLD,H1</button>
      <span className="mt-[2px] h-[14px] w-px bg-[#606060]" />
      <button className="pl-[11px] pr-[10px] h-[18px]">!STD_EURUSD,M1 (offline)</button>
      <button className="-mt-px px-[9px] h-[19px] bg-white text-black border border-t-0 border-b-2 border-r-2 border-black">!STD_EURUSD,M15 (offline)</button>
      <button className="px-[11px] h-[18px]">!STD_EURUSD,M1 (offline)</button>
      <span className="mt-[2px] h-[14px] w-px bg-[#606060]" />
      <span className="grow" />
      <button aria-label="Scroll tabs left" className="mr-[14px]">
        <svg width="4" height="8"><path d="M4 0v8L0 4z" fill="#808080" /></svg>
      </button>
      <button aria-label="Scroll tabs right" className="mr-[10px]">
        <svg width="4" height="8"><path d="M0 0v8l4-4z" fill="#808080" /></svg>
      </button>
    </div>
  )
}

const starPath = "M6 .8l1.500 3.500 3.700.4-2.800 2.500.8 3.700L6 9l-3.200 1.900.8-3.700L.8 4.700l3.700-.4z"

function Stars({ rating }: { rating: number }) {
  return (
    <span className="flex gap-[6px]" aria-label={`${rating} of 5`}>
      {[0, 1, 2, 3, 4].map((i) => (
        <svg key={i} width="12" height="12" viewBox="0 0 12 12" aria-hidden="true">
          <path d={starPath} fill={rating >= i + 1 ? "#f7dc7a" : "#f6f6f6"} stroke={rating > i ? "#b08a4a" : "#9c9c9c"} />
          {rating === i + 0.5 && <path d="M6 .8L4.500 4.300.8 4.700l2.800 2.500-.8 3.700L6 9z" fill="#f0cc50" stroke="#b08a4a" />}
        </svg>
      ))}
    </span>
  )
}

const terminalTabs = ["Trade", "Exposure", "Account History", "News", "Alerts", "Mailbox", "Market", "Signals", "Articles", "Code Base", "Experts", "Journal"]

function Terminal() {
  return (
    <section className="shrink-0 h-[130px] flex mt-1 pr-1">
      <div className="w-[15px] flex flex-col items-center pt-[3px] shrink-0">
        <button aria-label="Close Terminal">
          <svg width="6" height="6" stroke="#000" strokeWidth="1.500"><path d="M.5 .5l5 5M5.500 .5l-5 5" /></svg>
        </button>
        <h2 className="mt-1 grow w-[13px] text-[11px] leading-[13px] font-['Open_Sans',sans-serif] [writing-mode:vertical-rl] rotate-180 bg-linear-to-t from-[#d7e4f2] to-[#bccde0]">Terminal</h2>
      </div>
      <div className="grow min-w-0 flex flex-col">
        <div className="flex h-[106px] border-t border-l border-[#a0a0a0] bg-white overflow-hidden">
          <table className="grow table-fixed border-collapse self-start">
            <thead>
              <tr className="h-6">
                <th className="w-[342px] text-left font-normal pl-[6px] border-r border-[#e2e2e2]">Name</th>
                <th className="text-left font-normal pl-[6px] border-r border-[#e2e2e2]">Description</th>
                <th className="w-[101px] text-left font-normal pl-[6px] border-r border-[#e2e2e2]">Rating</th>
                <th className="w-[81px] font-normal">
                  <span className="flex items-center justify-end gap-[12px] pr-[7px]">
                    Date
                    <svg width="7" height="8" fill="none" stroke="#909090" aria-hidden="true"><path d="M0 .5h7M.5 1l3 6.500" /></svg>
                  </span>
                </th>
              </tr>
            </thead>
            <tbody>
              {codeBase.map((r, i) => (
                <tr key={r.name} className={`h-5 border-b border-[#c0c0c0] ${i % 2 ? "bg-[#eaeaea]" : ""}`}>
                  <td className="border-r border-[#c8c8c8] pl-[2px]">
                    <span className="flex items-center gap-[5px]">
                      {r.icon === "f" ? <FIcon size={14} /> : <EaIcon />}
                      {r.name}
                    </span>
                  </td>
                  <td className="border-r border-[#c8c8c8] pl-[2px] whitespace-pre overflow-hidden">{r.text}</td>
                  <td className="border-r border-[#c8c8c8] pl-[3px]"><Stars rating={r.rating} /></td>
                  <td className="text-right pr-1">{r.date}</td>
                </tr>
              ))}
            </tbody>
          </table>
          <ScrollBar thumb="h-[18px]" />
        </div>
        <div className="h-[22px] flex border-t border-black text-[#808080] pl-[2px]">
          {terminalTabs.map((t) =>
            t === "Code Base" ? (
              <button key={t} className="-mt-px h-5 px-[7px] bg-white text-black border border-t-0 border-b-2 border-r-2 border-black whitespace-nowrap">{t}</button>
            ) : (
              <div key={t} className="flex h-[18px]">
                <button className="px-[9px] whitespace-nowrap">
                  {t}
                  {t === "Mailbox" && <sub className="text-[#ff0000] text-[9px] font-bold ml-px">7</sub>}
                </button>
                {t !== "Articles" && <span className="mt-[2px] h-[14px] w-px bg-[#606060]" />}
              </div>
            )
          )}
        </div>
      </div>
    </section>
  )
}

const StatusCell = ({ className, children }: { className: string; children: ReactNode }) => (
  <span className={`h-[19px] border-l border-[#a0a0a0] pl-[5px] flex items-center gap-1 shrink-0 ${className}`}>{children}</span>
)

function StatusBar() {
  return (
    <footer className="h-[25px] shrink-0 flex items-center border-t border-[#a0a0a0] pl-[2px] pt-1">
      <span className="grow">For Help, press F1</span>
      <StatusCell className="w-[116px]">Default</StatusCell>
      <StatusCell className="w-[102px]">2022.03.24 00:45</StatusCell>
      <StatusCell className="w-[71px]">O: 1.10082</StatusCell>
      <StatusCell className="w-[71px]">H: 1.10102</StatusCell>
      <StatusCell className="w-[68px]">L: 1.10011</StatusCell>
      <StatusCell className="w-[70px]">C: 1.10024</StatusCell>
      <StatusCell className="w-[66px]">V: 1206</StatusCell>
      <StatusCell className="w-[130px]">
        <svg width="23" height="13" shapeRendering="crispEdges" aria-hidden="true">
          {[0, 1, 2, 3, 4, 5, 6, 7].map((i) => (
            <g key={i}>
              <rect x={i * 3} y="0" width="2" height={9 - i} fill="#5c7a12" />
              <rect x={i * 3} y={10 - i} width="2" height={3 + i} fill="#0f4a6b" />
            </g>
          ))}
        </svg>
        308/1 kb
      </StatusCell>
    </footer>
  )
}

function TaskApp({ label, state = "", children }: { label: string; state?: string; children: ReactNode }) {
  return (
    <button aria-label={label} className={`relative w-12 mr-px h-full flex items-center justify-center ${state === "active" ? "bg-[#4b5d66]" : ""}`}>
      <svg width="24" height="24" viewBox="0 0 24 24" fill="none" aria-hidden="true">{children}</svg>
      {state && <span className={`absolute bottom-0 h-[2px] bg-[#76b9ed] ${state === "active" ? "inset-x-0" : "inset-x-1"}`} />}
    </button>
  )
}

function Bear() {
  return (
    <svg width="80" height="39" viewBox="0 0 80 39" className="shrink-0 self-end" aria-hidden="true">
      <ellipse cx="40" cy="38" rx="40" ry="14" fill="#b5d6ef" />
      <path d="M12 34C12 18 30 6 44 6s24 14 24 28z" fill="#d3c5dc" />
      <path d="M40 8c14-4 28 8 30 26H46z" fill="#c9b8d4" />
      <path d="M18 24c0-8 4-16 12-17s16 6 14 16-8 11-16 11-10-4-10-10z" fill="#e0d4e6" />
      <circle cx="25" cy="7" r="4" fill="#d9cbe1" /><circle cx="25" cy="7" r="2" fill="#8f7aa3" />
      <circle cx="43" cy="19" r="4" fill="#d9cbe1" /><circle cx="43" cy="19" r="2" fill="#8f7aa3" />
      <ellipse cx="22" cy="26" rx="6" ry="5" fill="#f0e8f3" />
      <ellipse cx="22" cy="27" rx="2.500" ry="2" fill="#2c1f36" />
      <path d="M21 17l3 1M31 20l3 2" stroke="#2c1f36" strokeWidth="1.300" />
      <path d="M28 35c0-4 5-5 8-2 3-3 8-2 9 0 3-2 8-1 9 1h14c5-1 9 2 8 3H28z" fill="#ece4f0" />
      <path d="M32 33v3M36 33v3M48 33v3M52 33v3" stroke="#9b86ae" />
    </svg>
  )
}

function Taskbar() {
  return (
    <div className="h-10 shrink-0 flex items-center bg-linear-to-r from-[#20353f] via-[#1f3440] to-[#1b2842] text-white font-['Open_Sans',sans-serif]">
      <button aria-label="Start" className="w-12 h-full flex items-center justify-center">
        <svg width="16" height="16" fill="#fff"><path d="M0 2.300L7 1.300V7.600H0zM7.800 1.200L16 0v7.600H7.800zM0 8.400h7v6.400l-7-1zM7.800 8.400H16V16l-8.200-1.200z" /></svg>
      </button>
      <label className="w-[344px] h-full bg-[#f2f2f2] border border-[#c4c4c4] flex items-center text-[#222] overflow-hidden">
        <Search size={17} strokeWidth={1.5} className="ml-[11px] -scale-x-100 shrink-0" />
        <input aria-label="Search" placeholder="Type here to search" className="grow min-w-0 ml-[11px] text-[15px] bg-transparent outline-none placeholder:text-[#444]" />
        <Bear />
      </label>
      <TaskApp label="Task View">
        <path d="M4.500 4v3h10V4M4.500 20v-3h10v3M4.500 9.500h10v5h-10zM18.500 4v4M18.500 14v6" stroke="#fff" />
        <rect x="17" y="9.500" width="3" height="3" fill="#fff" />
      </TaskApp>
      <div className="ml-[2px] h-full flex">
        <TaskApp label="Edge">
          <circle cx="12" cy="12" r="12" fill="#1672c4" />
          <path d="M0 11C1 4 6 0 12 0c7 0 12 5 12 10 0 4-3 6-6 6-2 0-4-1-3-2.500 1-1.500.5-5.500-4-5.500C6 8 1.500 9 0 11z" fill="#36c3c0" />
          <path d="M14 .2C20 1 24 5 24 10c0 4-3 6-6 6-2 0-4-1-3-2.500 2-3 1-5.500-1-7z" fill="#5fd35a" />
          <path d="M9 12c-1 5 3 10 10 9-4 4-11 4-15 0 0-5 2-8 5-9z" fill="#0c4f9e" />
        </TaskApp>
        <TaskApp label="File Explorer">
          <path d="M1 3h8l2 2h12v16H1z" fill="#e3a21a" />
          <path d="M1 7h22v14H1z" fill="#fcd462" />
          <path d="M4 21v-8h16v8h-4v-4H8v4z" fill="#3e9be0" />
        </TaskApp>
        <TaskApp label="Chrome" state="open">
          <circle cx="12" cy="12" r="12" fill="#fcc934" />
          <path d="M12 12L1.600 6A12 12 0 0122.400 6H12z" fill="#ea4335" />
          <path d="M12 12l5.200 3L12 24A12 12 0 011.600 6l5.200 9z" fill="#34a853" />
          <circle cx="12" cy="12" r="5.800" fill="#fff" />
          <circle cx="12" cy="12" r="4.500" fill="#4285f4" />
        </TaskApp>
        <TaskApp label="Microsoft Store">
          <path d="M6.500 6V2.500q0-1 1-1h9q1 0 1 1V6" stroke="#2ab0ea" strokeWidth="2" />
          <path d="M1 6h22v15q0 2-2 2H3q-2 0-2-2z" fill="#f2f2f2" />
          <path d="M7.500 10h4v4h-4z" fill="#f25022" /><path d="M12.500 10h4v4h-4z" fill="#7fba00" />
          <path d="M7.500 15h4v4h-4z" fill="#00a4ef" /><path d="M12.500 15h4v4h-4z" fill="#ffb900" />
        </TaskApp>
        <TaskApp label="Mail">
          <path d="M0 9l12-8 12 8v4H0z" fill="#1259a8" />
          <path d="M2 9h20l-10 8z" fill="#fff" />
          <path d="M0 9l12 9 12-9v14H0z" fill="#2f9de4" />
          <path d="M0 23l12-9 12 9z" fill="#4cb6f5" />
        </TaskApp>
        <TaskApp label="XM" state="active">
          <rect width="24" height="24" rx="3" fill="#141414" />
          <path d="M3 8l3 4-3 5" stroke="#e02020" strokeWidth="2" />
          <path d="M6 8l5 9M12 8l-7 9M12 17l3-9 2 6 4-6-1 9" stroke="#fff" strokeWidth="2" />
        </TaskApp>
        <TaskApp label="Forex Simulator" state="open">
          <rect width="24" height="24" fill="#fff" />
          <text x="12" y="6" fontSize="5" fontWeight="700" textAnchor="middle" fill="#d22">soft4FX</text>
          <text x="12" y="12" fontSize="5" fontWeight="700" textAnchor="middle" fill="#222">Forex</text>
          <text x="12" y="16" fontSize="4" fontWeight="700" textAnchor="middle" fill="#222">Simulator</text>
          <path d="M0 18c6 0 14 3 24-1v7H0z" fill="#2fc4e0" /><path d="M0 21c8-2 14 2 24 0v3H0z" fill="#1479a8" />
        </TaskApp>
      </div>
      <span className="grow" />
      <svg width="24" height="18" viewBox="0 0 24 18" aria-hidden="true">
        <path d="M6 17a5 5 0 01-1-9.800A7 7 0 0118 7a5.200 5.200 0 011 10z" fill="#b9d3f7" />
        <path d="M5 7.200A7 7 0 0112 1c-4 2-4 6 1 9-3 1-6 0-8-2.800z" fill="#e8f1fd" />
      </svg>
      <span className="ml-2 text-[14px] flex gap-2"><span>22°C</span><span>Cloudy</span></span>
      <ChevronUp size={16} strokeWidth={1.5} className="ml-[13px]" />
      <svg width="14" height="18" viewBox="0 0 14 18" fill="none" stroke="#fff" className="ml-[8px]" aria-hidden="true">
        <path d="M3 2.500q3.500-2 7 0M3 15.500q3.500 2 7 0M1.500 5.500h7.500v7H1.500zM9.500 8l3-2v6l-3-2" />
      </svg>
      <svg width="18" height="16" viewBox="0 0 18 16" fill="none" stroke="#fff" className="ml-[8px]" aria-hidden="true">
        <path d="M5 3.500h12v8H4M1.500 1.500h4v4h-4zM3.500 6v8M8 14.500h7M11.500 12v2" />
      </svg>
      <svg width="18" height="16" viewBox="0 0 18 16" fill="none" stroke="#fff" className="ml-[7px]" aria-hidden="true">
        <path d="M1 6h2.500L7 3v10l-3.500-3H1zM9.500 6q1.500 2 0 4M12 4q3 4 0 8M14.500 2q4.500 6 0 12" />
      </svg>
      <span className="ml-[9px] text-[12px]">ENG</span>
      <div className="w-[82px] text-center text-[12px] leading-[18px]">
        <div>3:28 pm</div>
        <div>1/01/2023</div>
      </div>
      <button aria-label="Notification centre" className="relative w-[30px] h-full ml-px mr-[16px] flex items-center justify-center">
        <svg width="18" height="18" viewBox="0 0 18 18" aria-hidden="true">
          <path d="M1 1h16v12H8l-4 4v-4H1z" fill="#fff" />
          <path d="M4 4.500h10M4 7h10M4 9.500h7" stroke="#1b2842" />
        </svg>
        <span className="absolute right-[1px] bottom-[5px] size-4 rounded-full bg-[#2b3448] border border-[#8a94a6] text-[11px] leading-[14px]">3</span>
      </button>
    </div>
  )
}

export default function App() {
  return (
    <div className="h-screen flex flex-col overflow-hidden bg-[#f0f0f0] text-black text-[12px] leading-4 font-['Roboto',sans-serif] cursor-default">
      <TitleBar />
      <MenuBar />
      <StandardToolbar />
      <DrawToolbar />
      <main className="grow min-h-0 flex">
        <aside className="w-[188px] shrink-0 flex flex-col pb-1 border-b border-[#a0a0a0] font-['Open_Sans',sans-serif]">
          <MarketWatch />
          <Navigator />
        </aside>
        <div className="grow min-w-0 flex flex-col">
          <ChartWindow />
          <ChartTabs />
        </div>
      </main>
      <Terminal />
      <StatusBar />
      <Taskbar />
    </div>
  )
}
